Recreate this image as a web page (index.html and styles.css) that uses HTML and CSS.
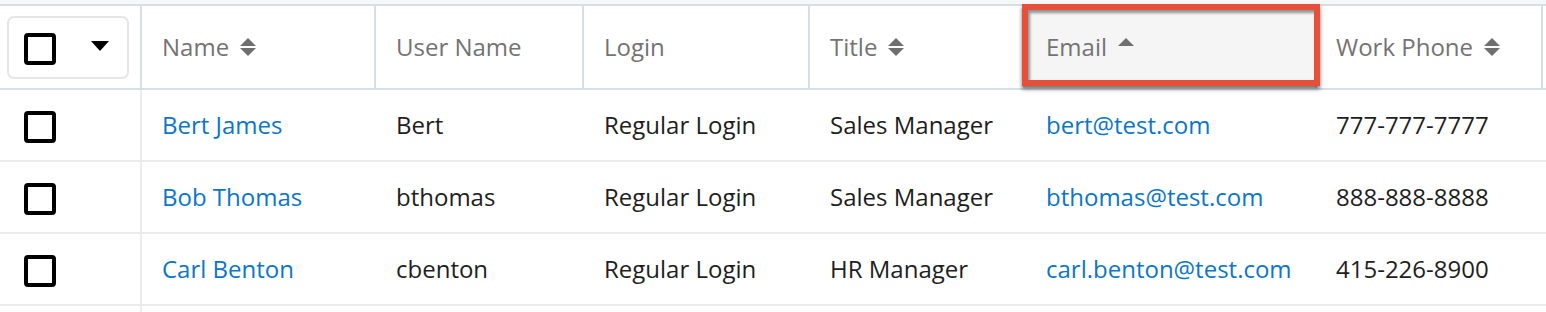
FILE: index.html
```html
<!DOCTYPE html>
<html>
<head>
<meta charset="utf-8">
<link rel="stylesheet" href="styles.css">
</head>
<body>
<div class="top-band"></div>
<div class="list">
  <div class="row head">
    <div class="cell w0">
      <div class="select-all">
        <span class="cb"></span>
        <svg class="caret" width="18" height="10" viewBox="0 0 18 10"><polygon points="0,0 18,0 9,10" fill="#000"/></svg>
      </div>
    </div>
    <div class="cell w1 th">Name <svg class="sort" width="18" height="18" viewBox="0 0 18 18"><polygon points="9,0 17,8 1,8"/><polygon points="1,10 17,10 9,18"/></svg></div>
    <div class="cell w2 th">User Name</div>
    <div class="cell w3 th">Login</div>
    <div class="cell w4 th">Title <svg class="sort" width="18" height="18" viewBox="0 0 18 18"><polygon points="9,0 17,8 1,8"/><polygon points="1,10 17,10 9,18"/></svg></div>
    <div class="cell w5 th sorted">Email <svg class="sort up" width="18" height="18" viewBox="0 0 18 18"><polygon points="9,0 17,8 1,8"/></svg></div>
    <div class="cell w6 th">Work Phone <svg class="sort" width="18" height="18" viewBox="0 0 18 18"><polygon points="9,0 17,8 1,8"/><polygon points="1,10 17,10 9,18"/></svg></div>
  </div>
  <div class="row item">
    <div class="cell w0 first"><span class="cb"></span></div>
    <div class="cell w1"><a class="link">Bert James</a></div>
    <div class="cell w2">Bert</div>
    <div class="cell w3">Regular Login</div>
    <div class="cell w4">Sales Manager</div>
    <div class="cell w5"><a class="link">bert@test.com</a></div>
    <div class="cell w6">777-777-7777</div>
  </div>
  <div class="row item">
    <div class="cell w0 first"><span class="cb"></span></div>
    <div class="cell w1"><a class="link">Bob Thomas</a></div>
    <div class="cell w2">bthomas</div>
    <div class="cell w3">Regular Login</div>
    <div class="cell w4">Sales Manager</div>
    <div class="cell w5"><a class="link">bthomas@test.com</a></div>
    <div class="cell w6">888-888-8888</div>
  </div>
  <div class="row item">
    <div class="cell w0 first"><span class="cb"></span></div>
    <div class="cell w1"><a class="link">Carl Benton</a></div>
    <div class="cell w2">cbenton</div>
    <div class="cell w3">Regular Login</div>
    <div class="cell w4">HR Manager</div>
    <div class="cell w5"><a class="link">carl.benton@test.com</a></div>
    <div class="cell w6">415-226-8900</div>
  </div>
  <div class="row item tail">
    <div class="cell w0 first"></div>
  </div>
</div>
<div class="callout"></div>
</body>
</html>
```

FILE: styles.css
```css
* { box-sizing: border-box; }
html, body {
  margin: 0;
  padding: 0;
  background: #ffffff;
  font-family: "Open Sans", "Noto Sans", sans-serif;
  font-size: 24px;
  color: #1e1e1e;
  overflow: hidden;
}
.top-band {
  height: 4px;
  background: #f5f7f9;
}
.list {
  width: 1546px;
}
.row {
  display: flex;
  width: 100%;
}
.row.head {
  height: 86px;
  border-top: 2px solid #d6dee6;
  border-bottom: 2px solid #d6dee6;
}
.row.item {
  height: 72px;
  border-bottom: 2px solid #ebebeb;
}
.row.tail { height: 20px; border-bottom: none; }
.cell {
  display: flex;
  align-items: center;
  flex: none;
  padding-left: 20px;
  padding-bottom: 2px;
  border-right: 2px solid transparent;
  white-space: nowrap;
}
.head .cell { border-right-color: #d6dee6; }
.item .cell.first { border-right-color: #ebebeb; padding-bottom: 0; }
.head .cell.w0 { padding-bottom: 0; }
.w0 { width: 142px; padding-left: 0; }
.w1 { width: 234px; }
.w2 { width: 208px; }
.w3 { width: 226px; }
.w4 { width: 215px; }
.w5 { width: 292px; padding-left: 21px; }
.w6 { width: 226px; padding-left: 19px; }
.th {
  color: #737373;
  gap: 10px;
}
.th.sorted { background: #f5f5f5; }
.sort {
  fill: #6f6f6f;
  flex: none;
  margin-top: 1px;
}
.select-all {
  margin-left: 7px;
  width: 122px;
  height: 63px;
  border: 2px solid #e6e6e6;
  border-radius: 7px;
  display: flex;
  align-items: center;
  padding-left: 15px;
  padding-top: 3px;
}
.select-all .caret {
  margin-left: 35px;
  margin-top: -6px;
}
.cb {
  display: block;
  width: 32px;
  height: 32px;
  border: 4px solid #000;
  border-radius: 4px;
  background: #fff;
}
.item .cb {
  margin-left: 24px;
  margin-top: 3px;
}
.link {
  color: #0b76c8;
  text-decoration: none;
}
.callout {
  position: absolute;
  left: 1022px;
  top: 4px;
  width: 298px;
  height: 82px;
  border: 6px solid #e6503b;
  box-shadow: 0 3px 4px rgba(0, 0, 0, 0.55), inset 2px 3px 3px rgba(0, 0, 0, 0.4);
}
```
